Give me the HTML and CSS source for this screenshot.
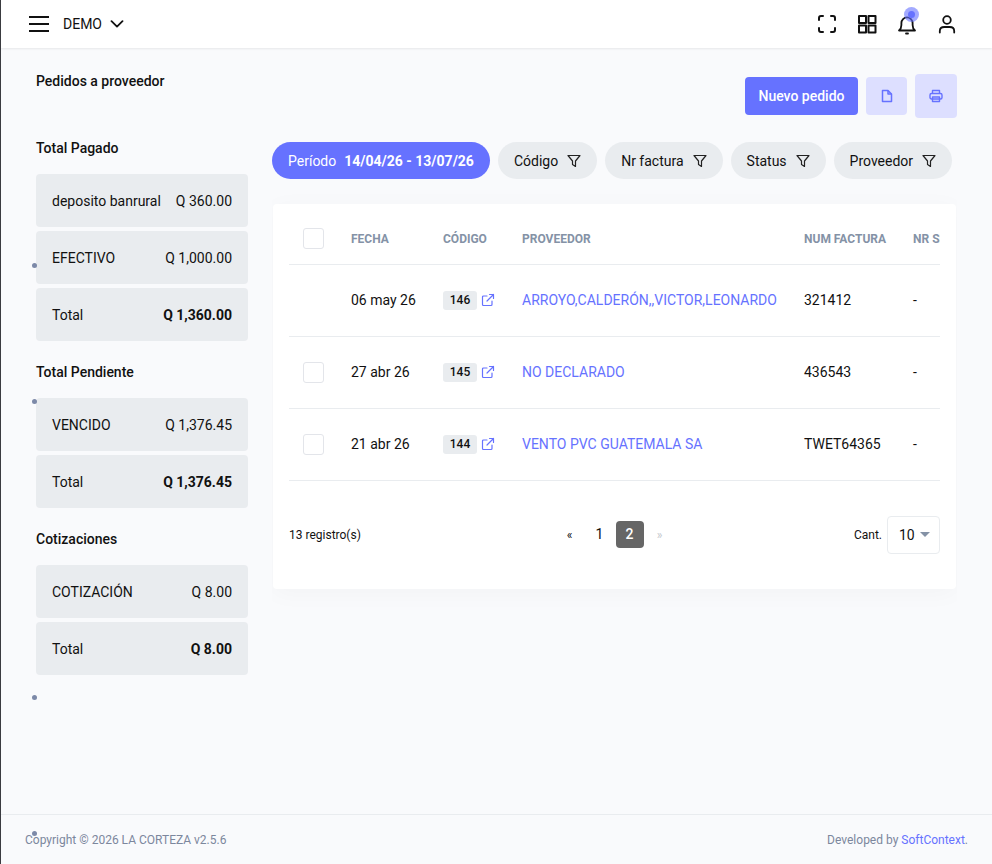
FILE: index.html
```html
<!DOCTYPE html>
<html lang="es">
<head>
    <meta charset="UTF-8">
    <meta name="viewport" content="width=device-width, initial-scale=1.0">
    <title>Pedidos a proveedor</title>
    <link rel="stylesheet" href="styles.css">
</head>
<body>
    <div class="page">
        <header class="topbar">
            <div class="topbar-left">
                <div class="burger"><span></span><span></span><span></span></div>
                <span class="company">DEMO</span>
                <svg class="chevron" width="14" height="8" viewBox="0 0 14 8" fill="none" stroke="#111" stroke-width="1.8" stroke-linecap="round" stroke-linejoin="round"><path d="M1.5 1.2 7 6.6l5.5-5.4"/></svg>
            </div>
            <div class="topbar-right">
                <svg class="top-icon" width="24" height="24" viewBox="0 0 24 24" fill="none" stroke="#111" stroke-width="2" stroke-linecap="round" stroke-linejoin="round"><path d="M8 4H6a2 2 0 0 0-2 2v2M16 4h2a2 2 0 0 1 2 2v2M8 20H6a2 2 0 0 1-2-2v-2M16 20h2a2 2 0 0 0 2-2v-2"/></svg>
                <svg class="top-icon" width="24" height="24" viewBox="0 0 24 24" fill="none" stroke="#111" stroke-width="2" stroke-linejoin="round"><rect x="4" y="4" width="7" height="7"/><rect x="13.5" y="4" width="7" height="7"/><rect x="4" y="13.5" width="7" height="7"/><rect x="13.5" y="13.5" width="7" height="7"/></svg>
                <div class="bell">
                    <svg class="top-icon" width="24" height="24" viewBox="0 0 24 24" fill="none" stroke="#111" stroke-width="1.8" stroke-linecap="round" stroke-linejoin="round"><path d="M4 18.5h16c-1.6-1.3-2.4-3-2.4-5.5v-2a5.6 5.6 0 0 0-11.2 0v2c0 2.500-.8 4.200-2.400 5.500Z"/><path d="M11 21.500h2"/></svg>
                    <span class="bell-halo"></span>
                    <span class="bell-dot"></span>
                </div>
                <svg class="top-icon" width="24" height="24" viewBox="0 0 24 24" fill="none" stroke="#111" stroke-width="1.8" stroke-linecap="round" stroke-linejoin="round"><circle cx="12" cy="8" r="3.800"/><path d="M4.800 20.500v-1.500c0-2.500 2-4 4.500-4h5.400c2.500 0 4.500 1.500 4.500 4v1.500"/></svg>
            </div>
        </header>

        <main class="content">
            <aside class="sidebar">
                <h1 class="page-title">Pedidos a proveedor</h1>

                <h2 class="group-title first">Total Pagado</h2>
                <div class="total-row"><span>deposito banrural</span><span>Q 360.00</span></div>
                <div class="total-row"><span>EFECTIVO</span><span>Q 1,000.00</span></div>
                <div class="total-row"><span>Total</span><strong>Q 1,360.00</strong></div>

                <h2 class="group-title">Total Pendiente</h2>
                <div class="total-row"><span>VENCIDO</span><span>Q 1,376.45</span></div>
                <div class="total-row"><span>Total</span><strong>Q 1,376.45</strong></div>

                <h2 class="group-title">Cotizaciones</h2>
                <div class="total-row"><span>COTIZACIÓN</span><span>Q 8.00</span></div>
                <div class="total-row"><span>Total</span><strong>Q 8.00</strong></div>
            </aside>

            <section class="main-col">
                <div class="actions">
                    <button class="btn-primary">Nuevo pedido</button>
                    <button class="btn-soft">
                        <svg width="14" height="14" viewBox="0 0 14 14" fill="none" stroke="#6672ff" stroke-width="1.500" stroke-linejoin="round"><path d="M2.500 1.500h5.500l3.500 3.500v7.500h-9Z"/><path d="M8 1.500V5h3.500"/></svg>
                    </button>
                    <button class="btn-soft btn-print">
                        <svg width="14" height="14" viewBox="0 0 14 14" fill="none" stroke="#6672ff" stroke-width="1.400" stroke-linejoin="round"><path d="M3.500 4.500v-3h7v3"/><rect x="1" y="4.500" width="12" height="5.500" rx="1.500"/><rect x="3.500" y="8" width="7" height="4.500"/></svg>
                    </button>
                </div>

                <div class="filters">
                    <div class="chip chip-active">Período <strong>14/04/26 - 13/07/26</strong></div>
                    <div class="chip">Código <svg class="funnel" width="14" height="14" viewBox="0 0 14 14" fill="none" stroke="#222" stroke-width="1.200" stroke-linejoin="round"><path d="M1 1.500h12L8.500 7v5.500l-3-2V7Z"/></svg></div>
                    <div class="chip">Nr factura <svg class="funnel" width="14" height="14" viewBox="0 0 14 14" fill="none" stroke="#222" stroke-width="1.200" stroke-linejoin="round"><path d="M1 1.500h12L8.500 7v5.500l-3-2V7Z"/></svg></div>
                    <div class="chip">Status <svg class="funnel" width="14" height="14" viewBox="0 0 14 14" fill="none" stroke="#222" stroke-width="1.200" stroke-linejoin="round"><path d="M1 1.500h12L8.500 7v5.500l-3-2V7Z"/></svg></div>
                    <div class="chip">Proveedor <svg class="funnel" width="14" height="14" viewBox="0 0 14 14" fill="none" stroke="#222" stroke-width="1.200" stroke-linejoin="round"><path d="M1 1.500h12L8.500 7v5.500l-3-2V7Z"/></svg></div>
                </div>

                <div class="card">
                    <div class="table-wrap">
                        <table class="orders">
                            <thead>
                                <tr>
                                    <th class="col-check"><span class="check"></span></th>
                                    <th class="col-date">FECHA</th>
                                    <th class="col-code">CÓDIGO</th>
                                    <th class="col-supplier">PROVEEDOR</th>
                                    <th class="col-invoice">NUM FACTURA</th>
                                    <th class="col-nrs">NR SERIE</th>
                                </tr>
                            </thead>
                            <tbody>
                                <tr>
                                    <td></td>
                                    <td>06 may 26</td>
                                    <td><span class="code-cell"><span class="code-badge">146</span><svg width="14" height="14" viewBox="0 0 14 14" fill="none" stroke="#6672ff" stroke-width="1.200" stroke-linecap="round" stroke-linejoin="round"><path d="M11 8v3.500a1 1 0 0 1-1 1H2.500a1 1 0 0 1-1-1V4a1 1 0 0 1 1-1H6M8.500 1.500h4v4M12.500 1.500 6 8"/></svg></span></td>
                                    <td><a class="supplier" href="#">ARROYO,CALDERÓN,,VICTOR,LEONARDO</a></td>
                                    <td>321412</td>
                                    <td>-</td>
                                </tr>
                                <tr>
                                    <td><span class="check"></span></td>
                                    <td>27 abr 26</td>
                                    <td><span class="code-cell"><span class="code-badge">145</span><svg width="14" height="14" viewBox="0 0 14 14" fill="none" stroke="#6672ff" stroke-width="1.200" stroke-linecap="round" stroke-linejoin="round"><path d="M11 8v3.500a1 1 0 0 1-1 1H2.500a1 1 0 0 1-1-1V4a1 1 0 0 1 1-1H6M8.500 1.500h4v4M12.500 1.500 6 8"/></svg></span></td>
                                    <td><a class="supplier" href="#">NO DECLARADO</a></td>
                                    <td>436543</td>
                                    <td>-</td>
                                </tr>
                                <tr>
                                    <td><span class="check"></span></td>
                                    <td>21 abr 26</td>
                                    <td><span class="code-cell"><span class="code-badge">144</span><svg width="14" height="14" viewBox="0 0 14 14" fill="none" stroke="#6672ff" stroke-width="1.200" stroke-linecap="round" stroke-linejoin="round"><path d="M11 8v3.500a1 1 0 0 1-1 1H2.500a1 1 0 0 1-1-1V4a1 1 0 0 1 1-1H6M8.500 1.500h4v4M12.500 1.500 6 8"/></svg></span></td>
                                    <td><a class="supplier" href="#">VENTO PVC GUATEMALA SA</a></td>
                                    <td>TWET64365</td>
                                    <td>-</td>
                                </tr>
                            </tbody>
                        </table>
                    </div>

                    <div class="table-footer">
                        <span class="records">13 registro(s)</span>
                        <div class="pager">
                            <span class="pager-arrow">«</span>
                            <span class="pager-num">1</span>
                            <span class="pager-num pager-current">2</span>
                            <span class="pager-arrow pager-disabled">»</span>
                        </div>
                        <div class="page-size">
                            <span class="page-size-label">Cant.</span>
                            <div class="select">10 <span class="caret"></span></div>
                        </div>
                    </div>
                </div>
            </section>
        </main>

        <footer class="footer">
            <span>Copyright © 2026 LA CORTEZA v2.5.6</span>
            <span>Developed by <a class="footer-link" href="#">SoftContext</a>.</span>
        </footer>

        <span class="stray-dot dot-1"></span>
        <span class="stray-dot dot-2"></span>
        <span class="stray-dot dot-3"></span>
        <span class="stray-dot dot-4"></span>
    </div>
</body>
</html>
```

FILE: styles.css
```css
* {
    margin: 0;
    padding: 0;
    box-sizing: border-box;
    font-family: 'Roboto', 'Liberation Sans', sans-serif;
}

body {
    background-color: #f9fafc;
    color: #111;
    font-size: 14px;
}

.page {
    position: relative;
    display: flex;
    flex-direction: column;
    height: 864px;
    border-left: 1px solid #3a3b40;
    overflow: hidden;
}

.topbar {
    display: flex;
    justify-content: space-between;
    align-items: center;
    height: 48px;
    padding: 0 33px 0 28px;
    background-color: white;
    box-shadow: 0 1px 2px rgba(0, 0, 0, 0.08);
}

.topbar-left {
    display: flex;
    align-items: center;
}

.burger {
    display: flex;
    flex-direction: column;
    gap: 5px;
    width: 20px;
    margin-right: 14px;
}

.burger span {
    display: block;
    height: 2px;
    background-color: #111;
}

.company {
    font-size: 14px;
    margin-right: 8px;
}

.burger {
    width: 20px;
}

.topbar-right {
    display: flex;
    align-items: center;
    gap: 16px;
}

.top-icon {
    display: block;
}

.bell {
    position: relative;
}

.bell-halo {
    position: absolute;
    top: -5px;
    left: 9px;
    width: 15px;
    height: 15px;
    border-radius: 50%;
    background-color: rgba(102, 114, 255, 0.6);
}

.bell-dot {
    position: absolute;
    top: -1px;
    left: 13px;
    width: 7px;
    height: 7px;
    border-radius: 50%;
    background-color: #6672ff;
}

.content {
    flex: 1;
    display: flex;
    padding: 26px 35px 0 35px;
}

.sidebar {
    width: 212px;
    margin-right: 24px;
    flex-shrink: 0;
}

.page-title {
    font-size: 14px;
    font-weight: 500;
    line-height: 14px;
    color: #111;
}

.group-title {
    font-size: 14px;
    font-weight: 500;
    line-height: 20px;
    margin: 21px 0 16px 0;
}

.group-title.first {
    margin-top: 50px;
}

.total-row {
    display: flex;
    justify-content: space-between;
    align-items: center;
    height: 53px;
    padding: 0 16px;
    margin-bottom: 4px;
    background-color: #e9ecef;
    border-radius: 4px;
}

.total-row strong {
    font-weight: 700;
}

.main-col {
    flex: 1;
    min-width: 0;
    overflow: hidden;
}

.actions {
    display: flex;
    justify-content: flex-end;
    align-items: center;
    gap: 8px;
    height: 44px;
}

.btn-primary {
    height: 38px;
    width: 113px;
    border: none;
    border-radius: 4px;
    background-color: #6672ff;
    color: white;
    font-size: 14px;
    font-weight: 500;
}

.btn-soft {
    display: flex;
    align-items: center;
    justify-content: center;
    width: 41px;
    height: 38px;
    border: none;
    border-radius: 4px;
    background-color: #dddfff;
}

.btn-print {
    width: 42px;
    height: 44px;
}

.filters {
    display: flex;
    gap: 8px;
    margin-top: 24px;
    overflow: hidden;
}

.chip {
    display: flex;
    align-items: center;
    flex-shrink: 0;
    height: 37px;
    padding: 0 16px;
    border-radius: 18.5px;
    background-color: #e9ecef;
    white-space: nowrap;
}

.chip-active {
    background-color: #6672ff;
    color: white;
}

.chip-active strong {
    font-weight: 700;
    margin-left: 8px;
}

.funnel {
    margin-left: 9px;
}

.card {
    width: 683px;
    height: 385px;
    margin: 25px 0 0 1px;
    padding: 10px 16px 0 16px;
    background-color: white;
    border-radius: 4px;
    box-shadow: 0 4px 24px rgba(0, 0, 0, 0.03);
}

.table-wrap {
    overflow: hidden;
}

.orders {
    width: 800px;
    table-layout: fixed;
    border-collapse: collapse;
}

.orders th {
    height: 50px;
    padding: 0 14px;
    text-align: left;
    font-size: 12px;
    font-weight: 700;
    color: #8492a6;
    border-bottom: 1px solid #e9ecef;
    white-space: nowrap;
}

.orders td {
    height: 72px;
    padding: 0 14px;
    border-bottom: 1px solid #e9ecef;
    white-space: nowrap;
}

.col-check { width: 48px; }
.col-date { width: 92px; }
.col-code { width: 79px; }
.col-supplier { width: 282px; }
.col-invoice { width: 109px; }
.col-nrs { width: 190px; }

.check {
    display: block;
    width: 21px;
    height: 21px;
    background-color: white;
    border: 1px solid #e3e5ea;
    border-radius: 3px;
}

.code-cell {
    display: flex;
    align-items: center;
    gap: 4px;
    width: 60px;
}

.code-badge {
    display: block;
    flex-shrink: 0;
    width: 34px;
    height: 19px;
    line-height: 19px;
    text-align: center;
    font-size: 12px;
    font-weight: 500;
    background-color: #e9ecef;
    border-radius: 3px;
}

.code-cell svg {
    flex-shrink: 0;
}

.supplier {
    color: #6672ff;
    text-decoration: none;
}

.table-footer {
    display: grid;
    grid-template-columns: 1fr auto 1fr;
    align-items: center;
    margin-top: 35px;
}

.records {
    font-size: 12px;
}

.pager {
    display: flex;
    align-items: center;
    gap: 2px;
}

.pager-arrow {
    width: 28px;
    text-align: center;
    font-size: 12px;
}

.pager-disabled {
    color: #c4c8ce;
}

.pager-num {
    width: 28px;
    height: 27px;
    line-height: 27px;
    text-align: center;
    border-radius: 4px;
}

.pager-current {
    background-color: #666;
    color: white;
    font-weight: 500;
}

.page-size {
    display: flex;
    align-items: center;
    justify-content: flex-end;
    gap: 5px;
}

.page-size-label {
    font-size: 12px;
}

.select {
    display: flex;
    align-items: center;
    width: 53px;
    height: 38px;
    padding-left: 11px;
    gap: 5px;
    background-color: white;
    border: 1px solid #e9ecef;
    border-radius: 4px;
}

.caret {
    width: 0;
    height: 0;
    border-left: 5px solid transparent;
    border-right: 5px solid transparent;
    border-top: 5px solid #8492a6;
}

.footer {
    display: flex;
    justify-content: space-between;
    align-items: center;
    height: 50px;
    padding: 0 24px;
    border-top: 1px solid #e9ecef;
    font-size: 12px;
    color: #7c879d;
}

.footer-link {
    color: #6672ff;
    text-decoration: none;
}

.stray-dot {
    position: absolute;
    left: 31px;
    width: 5px;
    height: 5px;
    border-radius: 50%;
    background-color: #7c89a8;
}

.dot-1 { top: 263px; }
.dot-2 { top: 399px; }
.dot-3 { top: 695px; }
.dot-4 { top: 831px; }
```
